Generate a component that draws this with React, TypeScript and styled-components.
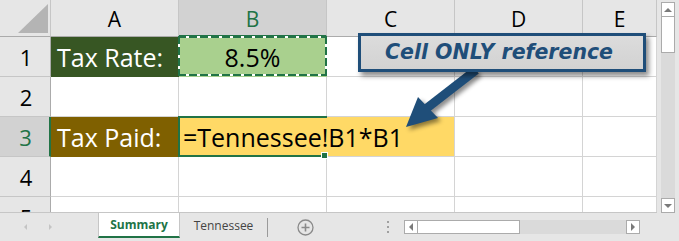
import React from 'react';
import styled, { createGlobalStyle, css } from 'styled-components';

const GREEN = '#217346';
const NAVY = '#1f4e79';
const FONT = `"Open Sans", "Noto Sans", sans-serif`;

const Global = createGlobalStyle`
  html, body { margin: 0; padding: 0; background: #fff; }
  body { font-family: ${FONT}; }
  #root { width: 679px; height: 241px; overflow: hidden; }
`;

const Window = styled.div`
  position: relative;
  width: 679px;
  height: 241px;
  display: flex;
  flex-direction: column;
  background: #e6e6e6;
  overflow: hidden;
`;

const Main = styled.div`
  display: flex;
  height: 213px;
  flex: none;
`;

const Sheet = styled.div`
  display: grid;
  grid-template-columns: 51px 128px 148px 128px 128px 74px;
  grid-template-rows: 37px repeat(5, 40px);
  width: 657px;
  height: 212px;
  border-bottom: 1px solid #c6c6c6;
  background: #fff;
  overflow: hidden;
`;

const Corner = styled.div`
  position: relative;
  background: #e6e6e6;
  border-right: 1px solid #c6c6c6;
  border-bottom: 1px solid #ababab;
  box-sizing: border-box;
  &::after {
    content: '';
    position: absolute;
    left: 18px;
    top: 4px;
    width: 30px;
    height: 29px;
    background: #b4b4b4;
    clip-path: polygon(100% 0, 100% 100%, 0 100%);
  }
`;

const ColHeader = styled.div<{ $selected?: boolean }>`
  display: flex;
  align-items: center;
  justify-content: center;
  box-sizing: border-box;
  font-size: 21px;
  padding-top: 2px;
  color: #000;
  background: #e6e6e6;
  border-right: 1px solid #c6c6c6;
  border-bottom: 1px solid #ababab;
  ${(p) =>
    p.$selected &&
    css`
      background: #d2d2d2;
      color: ${GREEN};
      border-bottom: 2px solid ${GREEN};
    `}
`;

const RowHeader = styled.div<{ $selected?: boolean }>`
  display: flex;
  align-items: center;
  justify-content: center;
  box-sizing: border-box;
  font-size: 22px;
  padding-left: 2px;
  color: #000;
  background: #e6e6e6;
  border-right: 1px solid #ababab;
  border-bottom: 1px solid #c6c6c6;
  ${(p) =>
    p.$selected &&
    css`
      background: #d2d2d2;
      color: ${GREEN};
      border-right: 2px solid ${GREEN};
    `}
`;

const Cell = styled.div<{ $bg?: string; $align?: 'left' | 'center'; $grid?: boolean }>`
  position: relative;
  display: flex;
  align-items: center;
  justify-content: ${(p) => (p.$align === 'center' ? 'center' : 'flex-start')};
  box-sizing: border-box;
  padding-left: ${(p) => (p.$align === 'center' ? '0' : '6px')};
  padding-top: 1px;
  font-size: 25px;
  white-space: nowrap;
  color: #000;
  background: ${(p) => p.$bg ?? '#fff'};
  border-right: 1px solid ${(p) => (p.$bg && !p.$grid ? p.$bg : '#d4d4d4')};
  border-bottom: 1px solid ${(p) => (p.$bg && !p.$grid ? p.$bg : '#d4d4d4')};
`;

const LabelCell = styled(Cell)`
  color: #fff;
`;

const CopyCell = styled(Cell)`
  &::after {
    content: '';
    position: absolute;
    left: -1px;
    top: -1px;
    right: -1px;
    bottom: 0;
    background:
      repeating-linear-gradient(90deg, ${GREEN} 0 8px, #fff 8px 11px) top / 100% 2px no-repeat,
      repeating-linear-gradient(90deg, ${GREEN} 0 8px, #fff 8px 11px) bottom / 100% 2px no-repeat,
      repeating-linear-gradient(180deg, ${GREEN} 0 8px, #fff 8px 11px) left / 2px 100% no-repeat,
      repeating-linear-gradient(180deg, ${GREEN} 0 8px, #fff 8px 11px) right / 2px 100% no-repeat;
  }
`;

const EditCell = styled(Cell)`
  z-index: 2;
  overflow: visible;
  padding-left: 4px;
  &::before {
    content: '';
    position: absolute;
    left: -1px;
    top: -1px;
    right: -1px;
    bottom: -1px;
    border: 2px solid ${GREEN};
    border-right: none;
    pointer-events: none;
  }
`;

const FillHandle = styled.span`
  position: absolute;
  right: -2px;
  bottom: -3px;
  width: 5px;
  height: 5px;
  background: ${GREEN};
  border: 1px solid #fff;
`;

const Caret = styled.span`
  display: inline-block;
  width: 1px;
  height: 34px;
  margin-left: 5px;
  background: #1f3864;
`;

const VScroll = styled.div`
  width: 22px;
  height: 213px;
  box-sizing: border-box;
  padding: 2px 4px 0 4px;
  display: flex;
  flex-direction: column;
  background: #e6e6e6;
`;

const ScrollBtn = styled.div`
  width: 14px;
  height: 15px;
  box-sizing: border-box;
  background: #fff;
  border: 1px solid #ababab;
  display: flex;
  align-items: center;
  justify-content: center;
  flex: none;
`;

const VThumb = styled.div`
  height: 36px;
  flex: none;
  box-sizing: border-box;
  background: #fff;
  border: 1px solid #ababab;
  border-top: none;
`;

const VTrack = styled.div`
  flex: 1;
  background: #dadada;
`;

const TabBar = styled.div`
  height: 28px;
  display: flex;
  align-items: stretch;
  background: #e6e6e6;
`;

const NavArea = styled.div`
  width: 98px;
  display: flex;
  align-items: center;
  gap: 22px;
  padding-left: 24px;
  box-sizing: border-box;
  flex: none;
`;

const Tab = styled.div<{ $active?: boolean }>`
  display: flex;
  align-items: center;
  justify-content: center;
  box-sizing: border-box;
  font-size: 12px;
  color: #444;
  flex: none;
  height: 25px;
  ${(p) =>
    p.$active &&
    css`
      background: #fff;
      color: ${GREEN};
      font-weight: 700;
      border-left: 1px solid #c6c6c6;
      border-right: 1px solid #c6c6c6;
      border-bottom: 2px solid ${GREEN};
    `}
`;

const TabSep = styled.div`
  width: 1px;
  height: 19px;
  align-self: center;
  background: #9a9a9a;
  flex: none;
`;

const AddBtn = styled.div`
  width: 80px;
  display: flex;
  align-items: center;
  justify-content: center;
  flex: none;
  padding-right: 6px;
  box-sizing: border-box;
`;

const Splitter = styled.div`
  width: 56px;
  display: flex;
  flex-direction: column;
  align-items: flex-end;
  justify-content: center;
  gap: 3px;
  padding-right: 15px;
  box-sizing: border-box;
  flex: none;
  span {
    width: 2px;
    height: 2px;
    background: #a0a0a0;
  }
`;

const HScroll = styled.div`
  display: flex;
  align-items: center;
  width: 236px;
  flex: none;
`;

const HBar = styled.div`
  display: flex;
  width: 236px;
  height: 14px;
`;

const HBtn = styled.div`
  width: 14px;
  height: 14px;
  box-sizing: border-box;
  background: #fff;
  border: 1px solid #ababab;
  display: flex;
  align-items: center;
  justify-content: center;
  flex: none;
`;

const HThumb = styled.div`
  width: 102px;
  flex: none;
  box-sizing: border-box;
  background: #fff;
  border: 1px solid #ababab;
  border-left: none;
`;

const HTrack = styled.div`
  flex: 1;
  background: #dadada;
`;

const Callout = styled.div`
  position: absolute;
  left: 358px;
  top: 33px;
  width: 288px;
  height: 39px;
  box-sizing: border-box;
  border: 3px solid ${NAVY};
  background: linear-gradient(#dcdcdc, #d2d2d2);
  box-shadow: 3px 4px 5px rgba(0, 0, 0, 0.45);
  display: flex;
  align-items: center;
  justify-content: center;
  font-family: "DejaVu Sans", Verdana, sans-serif;
  font-weight: 700;
  font-style: italic;
  font-size: 20.5px;
  color: ${NAVY};
  padding-bottom: 2px;
  padding-right: 6px;
`;

const ArrowSvg = styled.svg`
  position: absolute;
  left: 400px;
  top: 66px;
  filter: drop-shadow(3px 3px 2px rgba(0, 0, 0, 0.45));
  pointer-events: none;
`;

const Tri = ({ dir, color = '#7a7a7a', size = 4 }: { dir: 'up' | 'down' | 'left' | 'right'; color?: string; size?: number }) => {
  const s = size;
  const pts =
    dir === 'up'
      ? `0,${s} ${s},0 ${2 * s},${s}`
      : dir === 'down'
      ? `0,0 ${2 * s},0 ${s},${s}`
      : dir === 'left'
      ? `${s},0 ${s},${2 * s} 0,${s}`
      : `0,0 0,${2 * s} ${s},${s}`;
  const w = dir === 'up' || dir === 'down' ? 2 * s : s;
  const h = dir === 'up' || dir === 'down' ? s : 2 * s;
  return (
    <svg width={w} height={h} viewBox={`0 0 ${w} ${h}`}>
      <polygon points={pts} fill={color} />
    </svg>
  );
};

const cols = ['A', 'B', 'C', 'D', 'E'];

export default function App() {
  return (
    <>
      <Global />
      <Window>
        <Main>
          <Sheet>
            <Corner />
            {cols.map((c) => (
              <ColHeader key={c} $selected={c === 'B'}>
                {c}
              </ColHeader>
            ))}

            <RowHeader>1</RowHeader>
            <LabelCell $bg="#375623">Tax Rate:</LabelCell>
            <CopyCell $bg="#a9d08e" $align="center">
              8.5%
            </CopyCell>
            <Cell />
            <Cell />
            <Cell />

            <RowHeader>2</RowHeader>
            <Cell />
            <Cell />
            <Cell />
            <Cell />
            <Cell />

            <RowHeader $selected>3</RowHeader>
            <LabelCell $bg="#7f6000">Tax Paid:</LabelCell>
            <EditCell $bg="#ffd966">
              =Tennessee!B1*B1
              <Caret />
              <FillHandle />
            </EditCell>
            <Cell $bg="#ffd966" $grid />
            <Cell />
            <Cell />

            <RowHeader>4</RowHeader>
            <Cell />
            <Cell />
            <Cell />
            <Cell />
            <Cell />

            <RowHeader>5</RowHeader>
            <Cell />
            <Cell />
            <Cell />
            <Cell />
            <Cell />
          </Sheet>
          <VScroll>
            <ScrollBtn>
              <Tri dir="up" />
            </ScrollBtn>
            <VThumb />
            <VTrack />
            <ScrollBtn>
              <Tri dir="down" />
            </ScrollBtn>
          </VScroll>
        </Main>
        <TabBar>
          <NavArea>
            <Tri dir="left" color="#c4c4c4" size={3} />
            <Tri dir="right" color="#c4c4c4" size={3} />
          </NavArea>
          <Tab $active style={{ width: 82 }}>
            Summary
          </Tab>
          <Tab style={{ width: 87 }}>Tennessee</Tab>
          <TabSep />
          <AddBtn>
            <svg width="17" height="17" viewBox="0 0 17 17">
              <circle cx="8.5" cy="8.5" r="7.5" fill="none" stroke="#8a8a8a" strokeWidth="1.3" />
              <path d="M8.5 4.5v8M4.5 8.5h8" stroke="#8a8a8a" strokeWidth="1.6" />
            </svg>
          </AddBtn>
          <Splitter>
            <span />
            <span />
            <span />
          </Splitter>
          <HScroll>
            <HBar>
              <HBtn>
                <Tri dir="left" />
              </HBtn>
              <HThumb />
              <HTrack />
              <HBtn>
                <Tri dir="right" />
              </HBtn>
            </HBar>
          </HScroll>
        </TabBar>

        <ArrowSvg width="84" height="66" viewBox="0 0 84 66">
          <line x1="76" y1="4" x2="27" y2="42" stroke={NAVY} strokeWidth="9" />
          <polygon points="18,31 38,52 6,61" fill={NAVY} />
        </ArrowSvg>
        <Callout>Cell ONLY reference</Callout>
      </Window>
    </>
  );
}
